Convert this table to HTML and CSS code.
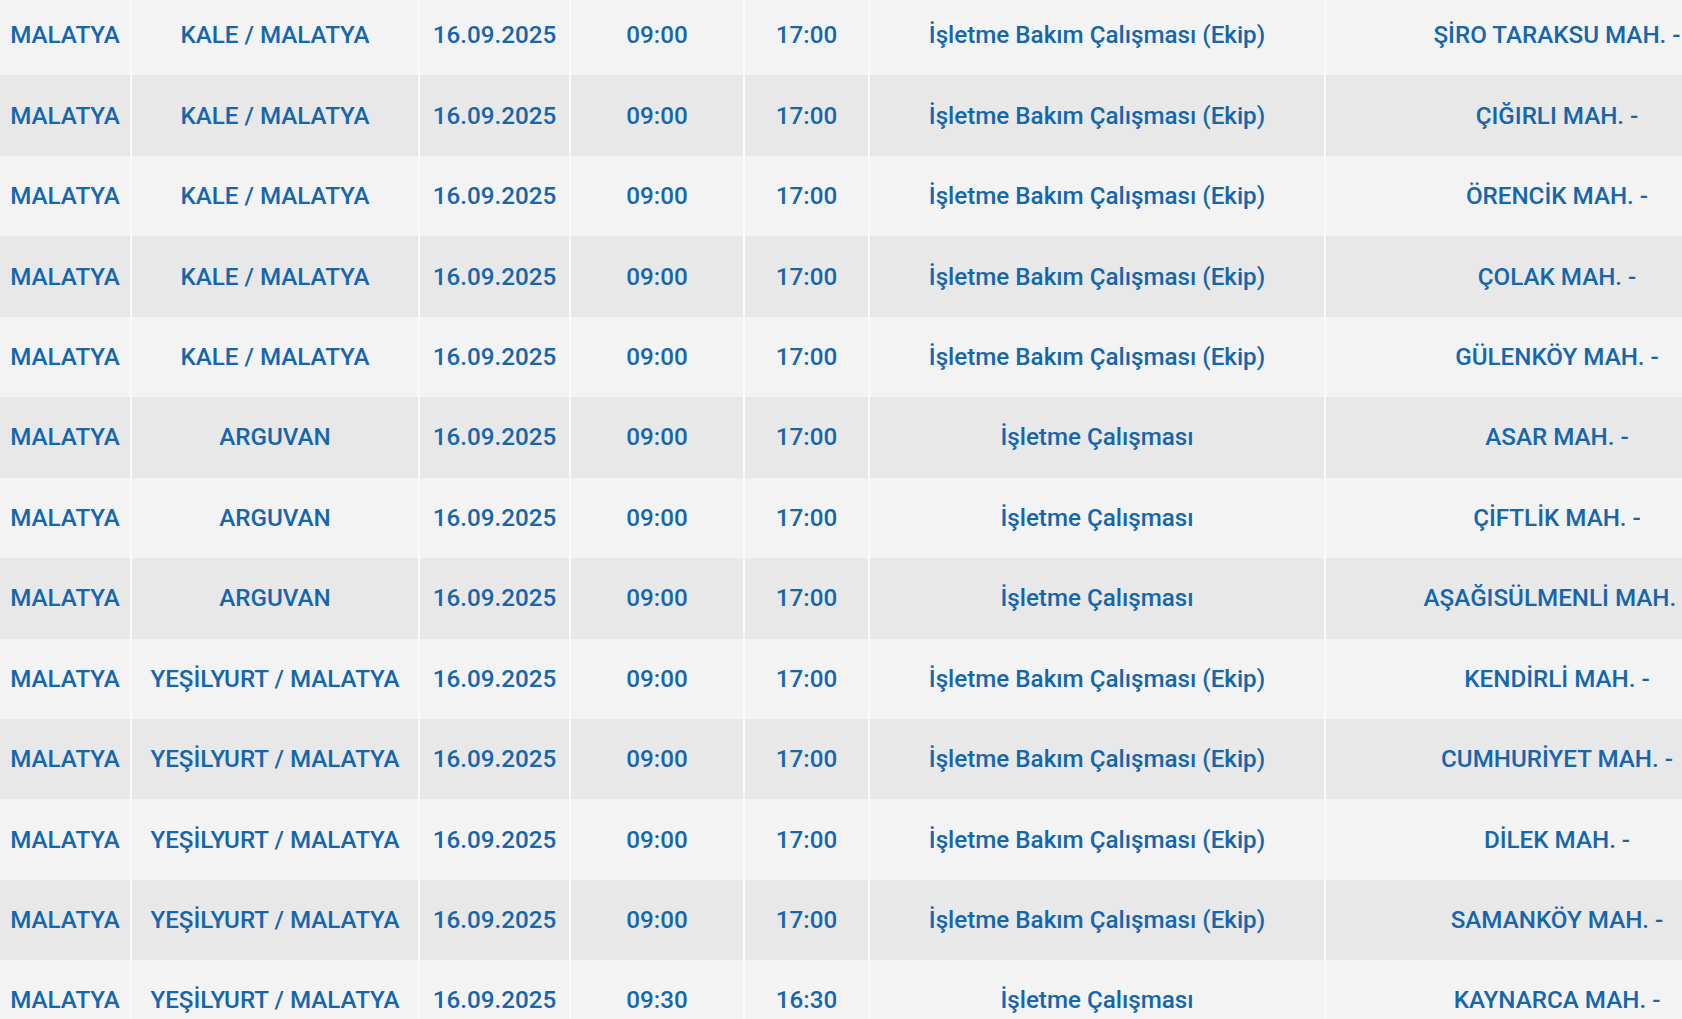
FILE: index.html
```html
<!DOCTYPE html>
<html lang="tr">
<head>
<meta charset="utf-8">
<title>Kesinti Listesi</title>
<link rel="stylesheet" href="styles.css">
</head>
<body>
<table class="outages">
<colgroup>
<col class="c-il"><col class="c-ilce"><col class="c-tarih"><col class="c-bas"><col class="c-bit"><col class="c-neden"><col class="c-mah">
</colgroup>
<tbody>
<tr><td>MALATYA</td><td>KALE / MALATYA</td><td>16.09.2025</td><td>09:00</td><td>17:00</td><td>İşletme Bakım Çalışması (Ekip)</td><td>ŞİRO TARAKSU MAH. -</td></tr>
<tr><td>MALATYA</td><td>KALE / MALATYA</td><td>16.09.2025</td><td>09:00</td><td>17:00</td><td>İşletme Bakım Çalışması (Ekip)</td><td>ÇIĞIRLI MAH. -</td></tr>
<tr><td>MALATYA</td><td>KALE / MALATYA</td><td>16.09.2025</td><td>09:00</td><td>17:00</td><td>İşletme Bakım Çalışması (Ekip)</td><td>ÖRENCİK MAH. -</td></tr>
<tr><td>MALATYA</td><td>KALE / MALATYA</td><td>16.09.2025</td><td>09:00</td><td>17:00</td><td>İşletme Bakım Çalışması (Ekip)</td><td>ÇOLAK MAH. -</td></tr>
<tr><td>MALATYA</td><td>KALE / MALATYA</td><td>16.09.2025</td><td>09:00</td><td>17:00</td><td>İşletme Bakım Çalışması (Ekip)</td><td>GÜLENKÖY MAH. -</td></tr>
<tr><td>MALATYA</td><td>ARGUVAN</td><td>16.09.2025</td><td>09:00</td><td>17:00</td><td>İşletme Çalışması</td><td>ASAR MAH. -</td></tr>
<tr><td>MALATYA</td><td>ARGUVAN</td><td>16.09.2025</td><td>09:00</td><td>17:00</td><td>İşletme Çalışması</td><td>ÇİFTLİK MAH. -</td></tr>
<tr><td>MALATYA</td><td>ARGUVAN</td><td>16.09.2025</td><td>09:00</td><td>17:00</td><td>İşletme Çalışması</td><td>AŞAĞISÜLMENLİ MAH. -</td></tr>
<tr><td>MALATYA</td><td>YEŞİLYURT / MALATYA</td><td>16.09.2025</td><td>09:00</td><td>17:00</td><td>İşletme Bakım Çalışması (Ekip)</td><td>KENDİRLİ MAH. -</td></tr>
<tr><td>MALATYA</td><td>YEŞİLYURT / MALATYA</td><td>16.09.2025</td><td>09:00</td><td>17:00</td><td>İşletme Bakım Çalışması (Ekip)</td><td>CUMHURİYET MAH. -</td></tr>
<tr><td>MALATYA</td><td>YEŞİLYURT / MALATYA</td><td>16.09.2025</td><td>09:00</td><td>17:00</td><td>İşletme Bakım Çalışması (Ekip)</td><td>DİLEK MAH. -</td></tr>
<tr><td>MALATYA</td><td>YEŞİLYURT / MALATYA</td><td>16.09.2025</td><td>09:00</td><td>17:00</td><td>İşletme Bakım Çalışması (Ekip)</td><td>SAMANKÖY MAH. -</td></tr>
<tr><td>MALATYA</td><td>YEŞİLYURT / MALATYA</td><td>16.09.2025</td><td>09:30</td><td>16:30</td><td>İşletme Çalışması</td><td>KAYNARCA MAH. -</td></tr>
</tbody>
</table>
</body>
</html>
```
FILE: styles.css
```css
html, body {
  margin: 0;
  padding: 0;
  background: #f3f3f3;
  overflow: hidden;
}
.outages {
  border-collapse: separate;
  border-spacing: 0;
  table-layout: fixed;
  width: 1788px;
  margin-top: -5px;
  font-family: Roboto, "Noto Sans", sans-serif;
  font-weight: 500;
  font-size: 24.2px;
  color: #1666ab;
}
.c-il { width: 130px; }
.c-ilce { width: 288px; }
.c-tarih { width: 151px; }
.c-bas { width: 174px; }
.c-bit { width: 125px; }
.c-neden { width: 456px; }
.c-mah { width: 464px; }
.outages tr {
  height: 80.45px;
  background: #f3f3f3;
}
.outages tr:nth-child(even) {
  background: #e8e8e8;
}
.outages td {
  padding: 0;
  text-align: center;
  vertical-align: middle;
  white-space: nowrap;
  overflow: hidden;
  border-left: 2px solid #fafafa;
}
.outages td:first-child {
  border-left: 0;
}
```
